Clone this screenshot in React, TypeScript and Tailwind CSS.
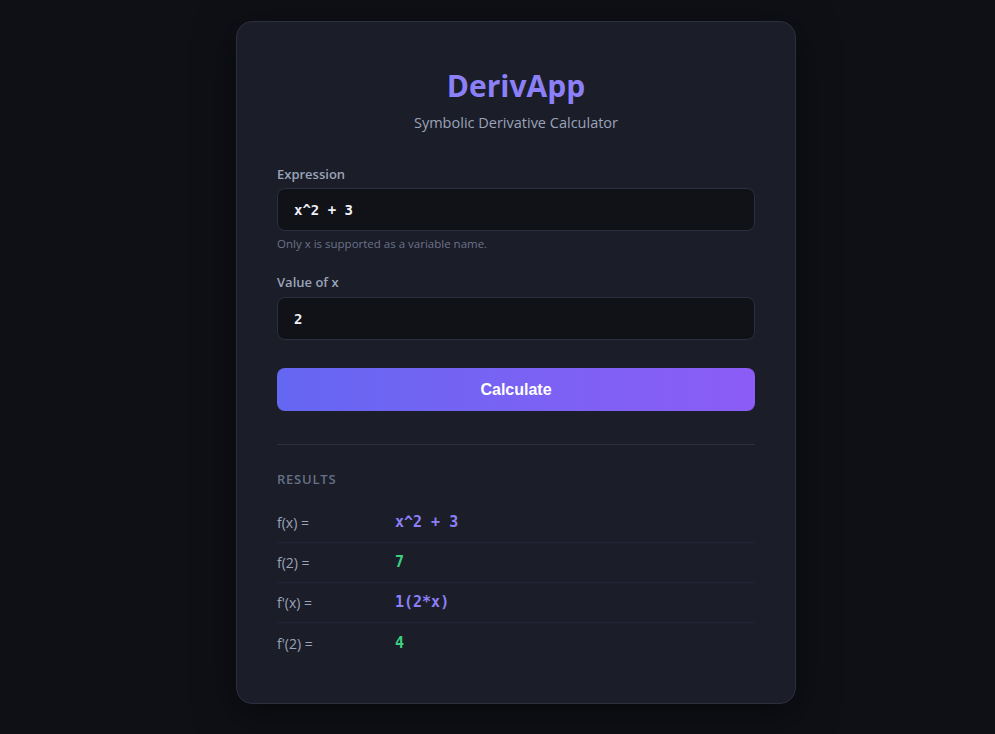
import React, { useState } from "react";

const sans = "font-['Open_Sans','Noto_Sans',sans-serif]";
const mono = "font-['DejaVu_Sans_Mono','Liberation_Mono',monospace]";

export default function App() {
  const [expr, setExpr] = useState("x^2 + 3");
  const [xVal, setXVal] = useState("2");

  const rows = [
    { label: "f(x) =", value: "x^2 + 3", color: "text-[#8b80f8]" },
    { label: "f(2) =", value: "7", color: "text-[#3ccf80]" },
    { label: "f'(x) =", value: "1(2*x)", color: "text-[#8b80f8]" },
    { label: "f'(2) =", value: "4", color: "text-[#3ccf80]" },
  ];

  return (
    <div className={`min-h-screen w-full bg-[#0f1016] flex justify-center pt-[21px] pl-[37px] ${sans}`}>
      <div className="w-[560px] h-[683px] rounded-2xl border border-[#2c2f3d] bg-[#1b1d29] px-10 pt-[46px] shadow-[0_10px_40px_rgba(0,0,0,0.5)]">
        {/* Header */}
        <h1 className="text-center text-[30px] leading-[36px] font-bold text-[#8b80f8]">
          DerivApp
        </h1>
        <p className="mt-[8px] text-center text-[14.5px] leading-[22px] text-[#9aa3b8]">
          Symbolic Derivative Calculator
        </p>

        {/* Expression */}
        <label className="mt-[31px] block text-[13px] leading-[18px] font-semibold text-[#9aa3b8]">
          Expression
        </label>
        <input
          value={expr}
          onChange={(e) => setExpr(e.target.value)}
          className={`mt-[5px] block w-full h-[43px] rounded-lg border border-[#2c2f3d] bg-[#111218] px-4 text-[14px] font-bold text-[#eef0f6] outline-none ${mono}`}
        />
        <p className="mt-[5px] text-[11.5px] leading-[16px] text-[#6b7389]">
          Only x is supported as a variable name.
        </p>

        {/* Value of x */}
        <label className="mt-[21px] block text-[13px] leading-[18px] font-semibold text-[#9aa3b8]">
          Value of x
        </label>
        <input
          value={xVal}
          onChange={(e) => setXVal(e.target.value)}
          className={`mt-[6px] block w-full h-[43px] rounded-lg border border-[#2c2f3d] bg-[#111218] px-4 text-[14px] font-bold text-[#eef0f6] outline-none ${mono}`}
        />

        <button className="mt-[28px] w-full h-[43px] rounded-lg bg-gradient-to-r from-[#6467f2] to-[#8b5cf6] text-white text-[16px] font-bold font-['Liberation_Sans',Arial,sans-serif]">
          Calculate
        </button>

        <div className="mt-[33px] border-t border-[#2c2f3d]" />

        {/* Results */}
        <h2 className="mt-[25px] text-[13px] leading-[18px] font-semibold tracking-[0.06em] text-[#667085]">
          RESULTS
        </h2>
        <div className="mt-[15px]">
          {rows.map((r, i) => (
            <div
              key={r.label}
              className={`flex items-center h-[40px] ${i < rows.length - 1 ? "border-b border-[#22253a]" : ""}`}
            >
              <span className="w-[118px] text-[14px] text-[#9aa3b8]">{r.label}</span>
              <span className={`text-[15px] font-bold ${mono} ${r.color}`}>{r.value}</span>
            </div>
          ))}
        </div>
      </div>
    </div>
  );
}
